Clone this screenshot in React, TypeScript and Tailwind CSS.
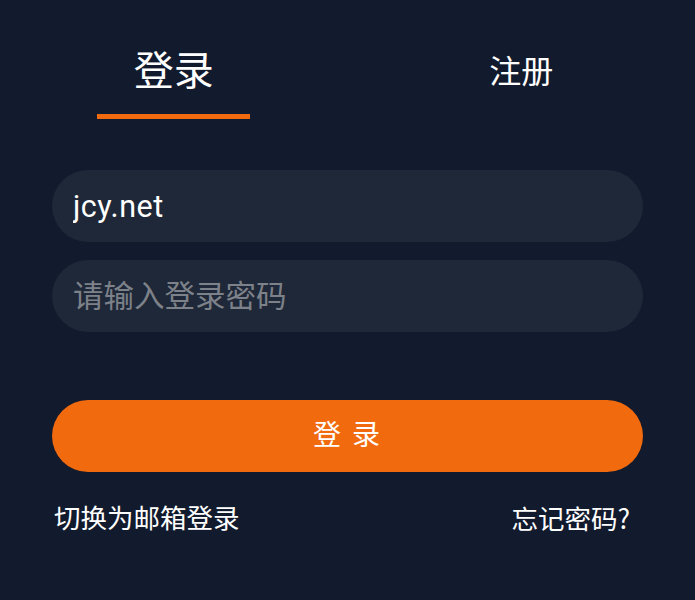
import { useState } from 'react';

// Login panel - tabs, account/password fields, submit, footer links

const FONT = "font-['Roboto','Noto_Sans_CJK_SC',sans-serif]";

export default function App() {
    const [tab, setTab] = useState<'login' | 'register'>('login');
    const [account, setAccount] = useState('jcy.net');
    const [password, setPassword] = useState('');

    return (
        <div className={`min-h-[600px] w-full bg-[#121a2d] text-white ${FONT}`}>
            {/* Tabs */}
            <div className="flex pt-[48px]">
                <button onClick={() => setTab('login')} className="flex flex-1 flex-col items-center">
                    <span className="text-[40px] leading-[48px]">登录</span>
                    <span
                        className={`mt-[18px] h-[5px] w-[153px] ${tab === 'login' ? 'bg-[#f26a0e]' : 'bg-transparent'}`}
                    />
                </button>
                <button onClick={() => setTab('register')} className="flex flex-1 flex-col items-center">
                    <span className="text-[32px] leading-[48px]">注册</span>
                    <span
                        className={`mt-[18px] h-[5px] w-[153px] ${tab === 'register' ? 'bg-[#f26a0e]' : 'bg-transparent'}`}
                    />
                </button>
            </div>

            {/* Form */}
            <div className="mt-[51px] flex flex-col px-[52px]">
                <input
                    value={account}
                    onChange={(e) => setAccount(e.target.value)}
                    className="h-[72px] rounded-full bg-[#1f2838] px-[21px] text-[30.5px] tracking-[0.5px] text-white outline-none"
                />
                <input
                    type="password"
                    value={password}
                    onChange={(e) => setPassword(e.target.value)}
                    placeholder="请输入登录密码"
                    className="mt-[18px] h-[72px] rounded-full bg-[#1f2838] px-[21px] text-[30.5px] text-white outline-none placeholder:text-[#7d8189]"
                />
                <button className="mt-[68px] h-[72px] rounded-full bg-[#f26a0e] text-[28px] tracking-[2px] text-white">
                    登 录
                </button>
                <div className="mt-[28px] flex items-center justify-between pl-[2px] pr-[13px] text-[26.5px] leading-[36px]">
                    <span>切换为邮箱登录</span>
                    <span>
                        忘记密码<span className="font-['Noto_Sans_CJK_SC',sans-serif]">?</span>
                    </span>
                </div>
            </div>
        </div>
    );
}
